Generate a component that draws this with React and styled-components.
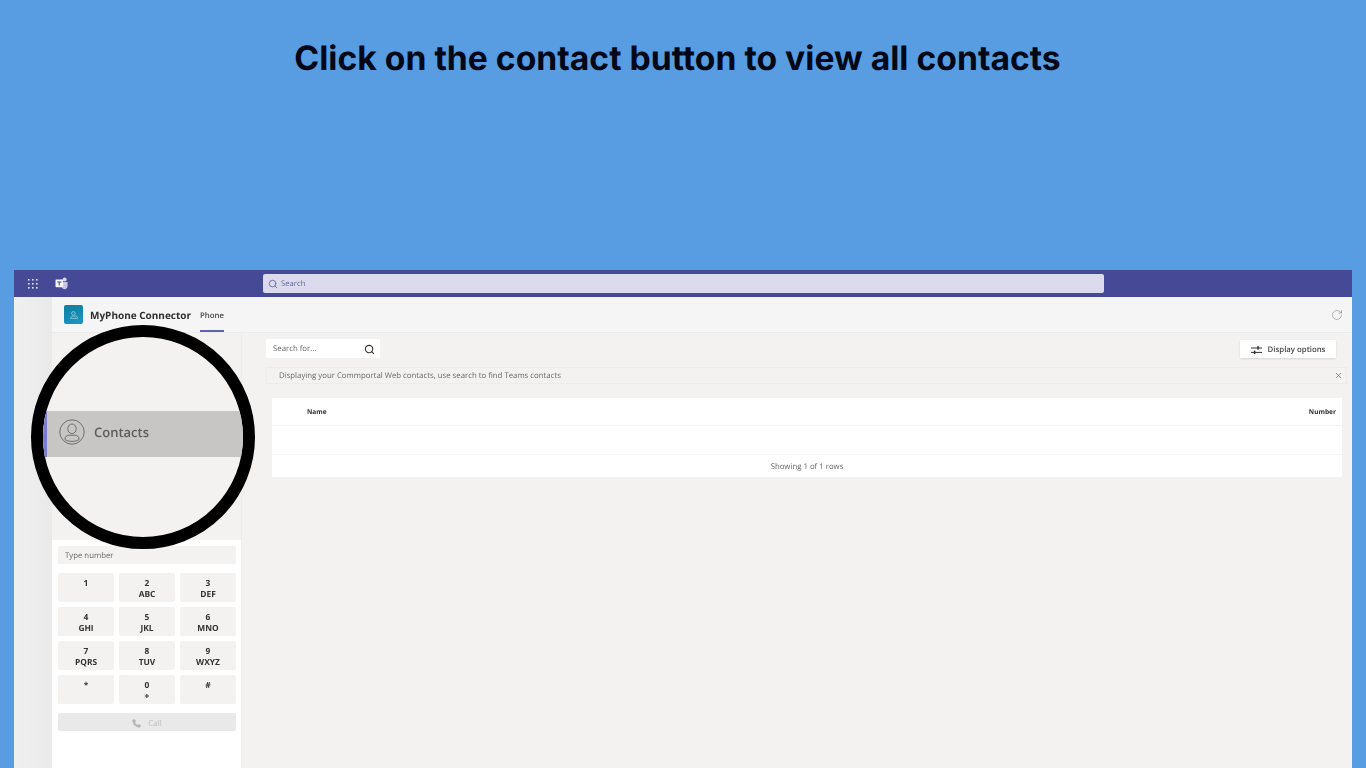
import styled, { createGlobalStyle } from "styled-components";
import { Search, X, RotateCw, Phone } from "lucide-react";

const Global = createGlobalStyle`
  html, body {
    margin: 0;
    padding: 0;
    background: #589ce1;
  }
  * {
    box-sizing: border-box;
  }
`;

const Page = styled.div`
  width: 1366px;
  height: 768px;
  overflow: hidden;
  background: #589ce1;
  display: flex;
  flex-direction: column;
  padding: 0 14px;
  font-family: "Open Sans", "Liberation Sans", sans-serif;
  text-rendering: geometricPrecision;
`;

const Heading = styled.h1`
  height: 270px;
  margin: 0;
  padding: 37px 11px 0 0;
  text-align: center;
  font-family: "Inter", "Liberation Sans", sans-serif;
  font-size: 33.7px;
  line-height: 44px;
  font-weight: 700;
  color: #020817;
`;

const Window = styled.div`
  position: relative;
  flex: 1;
  display: flex;
  flex-direction: column;
  background: #f3f2f1;
  filter: blur(0.3px);
`;

const TopBar = styled.div`
  height: 27px;
  flex: none;
  background: #464a96;
  display: flex;
  align-items: center;
`;

const TopIcons = styled.div`
  width: 249px;
  padding-left: 13px;
  display: flex;
  align-items: center;
  gap: 16px;
`;

const GlobalSearch = styled.div`
  width: 841px;
  height: 19px;
  background: #dcdbee;
  border-radius: 2px;
  display: flex;
  align-items: center;
  gap: 3px;
  padding-left: 5px;
  font-size: 7.7px;
  color: #62649a;
`;

const Body = styled.div`
  flex: 1;
  display: flex;
`;

const Rail = styled.div`
  width: 38px;
  flex: none;
  background: linear-gradient(90deg, #f0f0f0, #e9e9e9);
`;

const Main = styled.div`
  flex: 1;
  display: flex;
  flex-direction: column;
`;

const AppHeader = styled.div`
  height: 36px;
  flex: none;
  background: #f5f5f5;
  border-bottom: 1px solid #ebebeb;
  display: flex;
  align-items: center;
  padding: 0 9px 0 12px;
`;

const AppLogo = styled.div`
  width: 19px;
  height: 19px;
  border-radius: 2px;
  background: linear-gradient(160deg, #0f7f9e, #1b96c4);
  display: flex;
  align-items: center;
  justify-content: center;
`;

const AppName = styled.div`
  margin-left: 7px;
  font-size: 10px;
  font-weight: 700;
  color: #2e2e2e;
`;

const Tab = styled.div`
  align-self: stretch;
  margin-left: 9px;
  padding-top: 5px;
  display: flex;
  align-items: center;
  font-size: 7.8px;
  font-weight: 600;
  color: #444;
  border-bottom: 2px solid #6264a7;
`;

const Refresh = styled.div`
  margin-left: auto;
  display: flex;
  color: #777;
`;

const Columns = styled.div`
  flex: 1;
  display: flex;
`;

const Sidebar = styled.div`
  width: 190px;
  flex: none;
  display: flex;
  flex-direction: column;
  border-right: 1px solid #ececec;
`;

const SideTop = styled.div`
  height: 207px;
  flex: none;
`;

const DialPanel = styled.div`
  flex: 1;
  background: #fff;
  padding: 6px 5px 0 6px;
  display: flex;
  flex-direction: column;
`;

const NumberInput = styled.div`
  height: 18px;
  background: #f3f2f1;
  border-radius: 2px;
  padding: 1px 0 0 7px;
  display: flex;
  align-items: center;
  font-size: 7.8px;
  color: #666;
`;

const Keypad = styled.div`
  margin-top: 9px;
  display: grid;
  grid-template-columns: repeat(3, 56px);
  grid-auto-rows: 29px;
  column-gap: 5px;
  row-gap: 5px;
`;

const Key = styled.div`
  background: #f3f2f1;
  border-radius: 2px;
  display: flex;
  flex-direction: column;
  align-items: center;
  padding-top: 5px;
  font-size: 8.4px;
  line-height: 11px;
  font-weight: 700;
  color: #333;
`;

const CallButton = styled.div`
  margin-top: 9px;
  height: 18px;
  background: #e9e9e9;
  border-radius: 2px;
  display: flex;
  align-items: center;
  justify-content: center;
  gap: 7px;
  padding-top: 2px;
  font-size: 8px;
  color: #bdbdbd;
`;

const Content = styled.div`
  flex: 1;
  display: flex;
  flex-direction: column;
  padding: 6px 5px 0 24px;
`;

const Toolbar = styled.div`
  display: flex;
  justify-content: space-between;
  align-items: center;
  padding-right: 11px;
`;

const SearchBox = styled.div`
  width: 114px;
  height: 19px;
  background: #fff;
  display: flex;
  align-items: center;
  justify-content: space-between;
  padding: 1px 5px 0 7px;
  font-size: 7.8px;
  color: #666;
`;

const OptionsButton = styled.div`
  width: 96px;
  height: 18px;
  background: #fff;
  box-shadow: 0 1px 2px rgba(0, 0, 0, 0.12);
  display: flex;
  align-items: center;
  justify-content: center;
  gap: 6px;
  padding-top: 2px;
  font-size: 7.8px;
  font-weight: 600;
  color: #444;
`;

const Banner = styled.div`
  margin-top: 9px;
  height: 17px;
  border: 1px solid #ececec;
  display: flex;
  align-items: center;
  justify-content: space-between;
  padding: 0 3px 0 12px;
  font-size: 7.8px;
  color: #666;
`;

const Table = styled.div`
  margin: 14px 5px 0 6px;
  background: #fff;
`;

const HeadRow = styled.div`
  height: 28px;
  border-bottom: 1px solid #f3f2f1;
  display: flex;
  align-items: center;
  justify-content: space-between;
  padding: 0 6px 1px 35px;
  font-size: 6.6px;
  font-weight: 700;
  color: #333;
`;

const EmptyRow = styled.div`
  height: 29px;
  border-bottom: 1px solid #f6f5f4;
`;

const TableFooter = styled.div`
  height: 22px;
  padding-top: 1px;
  display: flex;
  align-items: center;
  justify-content: center;
  font-size: 7.8px;
  color: #666;
`;

const Lens = styled.div`
  position: absolute;
  left: 17px;
  top: 55px;
  width: 224px;
  height: 224px;
  border-radius: 50%;
  border: 12px solid #000;
  background: #f3f2f1;
  overflow: hidden;
  display: flex;
  flex-direction: column;
  justify-content: center;
`;

const LensRow = styled.div`
  height: 46px;
  margin-bottom: 7px;
  background: #c8c6c4;
  display: flex;
  align-items: center;
  gap: 9px;
  padding: 0 0 4px 16px;
  font-size: 13px;
  font-weight: 600;
  color: #5c5c5c;
  box-shadow: inset 4px 0 0 #7b7bd0;
`;

const keys = [
  ["1", ""],
  ["2", "ABC"],
  ["3", "DEF"],
  ["4", "GHI"],
  ["5", "JKL"],
  ["6", "MNO"],
  ["7", "PQRS"],
  ["8", "TUV"],
  ["9", "WXYZ"],
  ["*", ""],
  ["0", "+"],
  ["#", ""],
];

const Waffle = () => (
  <svg width="12" height="12" viewBox="0 0 12 12" fill="#e4e4f2">
    {[1, 5, 9].map((y) =>
      [1, 5, 9].map((x) => <rect key={`${x}-${y}`} x={x} y={y} width="1.6" height="1.6" />)
    )}
  </svg>
);

const TeamsLogo = () => (
  <svg width="13" height="13" viewBox="0 0 13 13">
    <circle cx="9.6" cy="2.6" r="2" fill="#d8d9ee" />
    <path d="M6 5h6.6v4a3 3 0 0 1-5.2 2.2L6 9z" fill="#c4c6e6" />
    <rect x="0.5" y="2.6" width="7.6" height="7.6" rx="0.8" fill="#f4f4fb" />
    <path d="M2.2 4.4h4.2v1H4.8v3.2H3.7V5.4H2.2z" fill="#464a96" />
  </svg>
);

const LogoMark = () => (
  <svg width="10" height="10" viewBox="0 0 10 10" fill="none" stroke="#8fd0e4" strokeWidth="0.8">
    <circle cx="4.4" cy="3.4" r="1.8" />
    <path d="M1.6 8.4c.2-1.6 1.2-2.3 2.8-2.3h2.4c.9 0 1.5.5 1.7 1.4v.9z" />
  </svg>
);

const Sliders = () => (
  <svg width="11" height="10" viewBox="0 0 11 10" stroke="#333" fill="#333" strokeWidth="1">
    <path d="M0 3h11M0 7.4h11" />
    <rect x="6.2" y="1.2" width="1.6" height="3.4" stroke="none" />
    <rect x="2.8" y="5.6" width="1.6" height="3.4" stroke="none" />
  </svg>
);

const PersonCircle = () => (
  <svg width="26" height="26" viewBox="0 0 26 26" fill="none" stroke="#6e6e6e" strokeWidth="1">
    <circle cx="13" cy="13" r="12.2" />
    <ellipse cx="13" cy="9.8" rx="4.2" ry="4.8" />
    <path d="M6 20.6c-.4-2.6 1.6-4.4 4-4.4h6c2.4 0 4.4 1.8 4 4.4-1.6 1.2-4.2 1.8-7 1.8s-5.4-.6-7-1.8z" />
  </svg>
);

const App = () => {
  return (
    <Page>
      <Global />
      <Heading>Click on the contact button to view all contacts</Heading>
      <Window>
        <TopBar>
          <TopIcons>
            <Waffle />
            <TeamsLogo />
          </TopIcons>
          <GlobalSearch>
            <Search size={10} color="#62649a" />
            Search
          </GlobalSearch>
        </TopBar>
        <Body>
          <Rail />
          <Main>
            <AppHeader>
              <AppLogo>
                <LogoMark />
              </AppLogo>
              <AppName>MyPhone Connector</AppName>
              <Tab>Phone</Tab>
              <Refresh>
                <RotateCw size={12} strokeWidth={1} />
              </Refresh>
            </AppHeader>
            <Columns>
              <Sidebar>
                <SideTop />
                <DialPanel>
                  <NumberInput>Type number</NumberInput>
                  <Keypad>
                    {keys.map(([digit, letters]) => (
                      <Key key={digit}>
                        <span>{digit}</span>
                        <span>{letters}</span>
                      </Key>
                    ))}
                  </Keypad>
                  <CallButton>
                    <Phone size={9} color="#b5b5b5" fill="#b5b5b5" />
                    Call
                  </CallButton>
                </DialPanel>
              </Sidebar>
              <Content>
                <Toolbar>
                  <SearchBox>
                    Search for...
                    <Search size={11} color="#333" strokeWidth={2.4} />
                  </SearchBox>
                  <OptionsButton>
                    <Sliders />
                    Display options
                  </OptionsButton>
                </Toolbar>
                <Banner>
                  Displaying your Commportal Web contacts, use search to find Teams contacts
                  <X size={9} color="#666" />
                </Banner>
                <Table>
                  <HeadRow>
                    <span>Name</span>
                    <span>Number</span>
                  </HeadRow>
                  <EmptyRow />
                  <TableFooter>Showing 1 of 1 rows</TableFooter>
                </Table>
              </Content>
            </Columns>
          </Main>
        </Body>
        <Lens>
          <LensRow>
            <PersonCircle />
            Contacts
          </LensRow>
        </Lens>
      </Window>
    </Page>
  );
};

export default App;
